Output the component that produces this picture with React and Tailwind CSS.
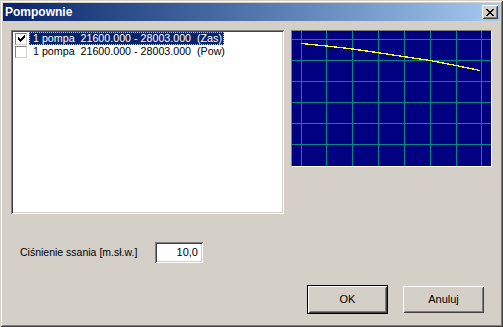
import React from 'react';

const raised =
  'shadow-[inset_1px_1px_0_#ffffff,inset_-1px_-1px_0_#404040,inset_2px_2px_0_#d4d0c8,inset_-2px_-2px_0_#808080]';
const sunken =
  'shadow-[inset_1px_1px_0_#808080,inset_-1px_-1px_0_#ffffff,inset_2px_2px_0_#404040,inset_-2px_-2px_0_#d4d0c8]';

// small pixel glyphs
const CHECK = ['......X', '.....XX', 'X...XXX', 'XX.XXX.', 'XXXXX..', '.XXX...', '..X....'];
const CROSS = ['XX....XX', '.XX..XX.', '..XXXX..', '...XX...', '..XXXX..', '.XX..XX.', 'XX....XX'];

function Pixels({ rows, color = '#000' }) {
  const w = rows[0].length;
  const h = rows.length;
  return (
    <svg width={w} height={h} viewBox={`0 0 ${w} ${h}`} shapeRendering="crispEdges">
      {rows.map((r, y) =>
        r.split('').map((c, x) => (c === 'X' ? <rect key={`${x}-${y}`} x={x} y={y} width="1" height="1" fill={color} /> : null))
      )}
    </svg>
  );
}

function CheckBox({ checked }) {
  return (
    <div className="w-[12px] h-[12px] bg-white border border-t-[#808080] border-l-[#808080] border-b-[#d4d0c8] border-r-[#d4d0c8] flex items-center justify-center shrink-0">
      {checked && <Pixels rows={CHECK} />}
    </div>
  );
}

const vLines = [9, 34, 60, 86, 112, 138, 164, 189];
const hLines = [8, 29, 50, 71, 92, 113];
const curve = [
  [9, 12], [30, 14], [57, 17], [85, 21], [111, 25], [138, 29], [164, 34], [188, 39],
];

function Chart() {
  return (
    <div className="w-[201px] h-[137px] border border-t-[#808080] border-l-[#808080] border-b-white border-r-white bg-[#000080]">
      <svg width="199" height="135" shapeRendering="crispEdges">
        {vLines.map((x) => (
          <line key={'v' + x} x1={x + 0.5} y1="0" x2={x + 0.5} y2="135" stroke="#008a80" strokeWidth="1" />
        ))}
        {hLines.map((y) => (
          <line key={'h' + y} x1="0" y1={y + 0.5} x2="199" y2={y + 0.5} stroke="#008a80" strokeWidth="1" />
        ))}
        <polyline
          points={curve.map(([x, y]) => `${x},${y + 0.5}`).join(' ')}
          fill="none"
          stroke="#ffff00"
          strokeWidth="1.3"
        />
      </svg>
    </div>
  );
}

export default function App() {
  return (
    <div
      className={`w-[503px] h-[327px] bg-[#d4d0c8] p-[3px] flex flex-col font-['Liberation_Sans',Arial,sans-serif] text-black ${'shadow-[inset_1px_1px_0_#d4d0c8,inset_-1px_-1px_0_#404040,inset_2px_2px_0_#ffffff,inset_-2px_-2px_0_#808080]'}`}
    >
      {/* Title bar */}
      <div className="h-[18px] flex items-center justify-between bg-linear-to-r from-[#0a246a] to-[#a6caf0] pl-[2px] pr-[2px]">
        <span className="text-white font-bold text-[12px] leading-none">Pompownie</span>
        <div className={`w-[16px] h-[14px] bg-[#d4d0c8] flex items-center justify-center ${raised}`}>
          <Pixels rows={CROSS} />
        </div>
      </div>

      {/* Body */}
      <div className="flex items-start pl-[8px] pt-[9px]">
        <div className={`w-[273px] h-[184px] bg-white p-[2px] ${sunken}`}>
          <div className="flex items-center h-[13px]">
            <div className="ml-[2px]">
              <CheckBox checked />
            </div>
            <div className="ml-[2px] h-[13px] flex items-center bg-[#0a246a] text-white border border-dotted border-[#d8c878] pl-[3px] pr-[1px] text-[10.7px] leading-none whitespace-pre">
              1 pompa  21600.000 - 28003.000  (Zas)
            </div>
          </div>
          <div className="flex items-center h-[13px]">
            <div className="ml-[2px]">
              <CheckBox />
            </div>
            <div className="ml-[2px] h-[13px] flex items-center pl-[4px] text-[10.7px] leading-none whitespace-pre">
              1 pompa  21600.000 - 28003.000  (Pow)
            </div>
          </div>
        </div>
        <div className="ml-[7px]">
          <Chart />
        </div>
      </div>

      <div className="flex items-center mt-[28px] pl-[17px]">
        <span className="w-[135px] text-[10.5px] leading-none">Ciśnienie ssania [m.sł.w.]</span>
        <div className={`w-[48px] h-[21px] bg-white flex items-center justify-end pr-[5px] text-[11px] leading-none ${sunken}`}>
          10,0
        </div>
      </div>

      <div className="flex justify-end items-center mt-[22px] pr-[16px] gap-[15px]">
        <div className="border border-black">
          <div className={`w-[79px] h-[27px] bg-[#d4d0c8] flex items-center justify-center text-[11px] ${raised}`}>OK</div>
        </div>
        <div className={`w-[81px] h-[27px] bg-[#d4d0c8] flex items-center justify-center text-[11px] ${raised}`}>Anuluj</div>
      </div>
    </div>
  );
}
